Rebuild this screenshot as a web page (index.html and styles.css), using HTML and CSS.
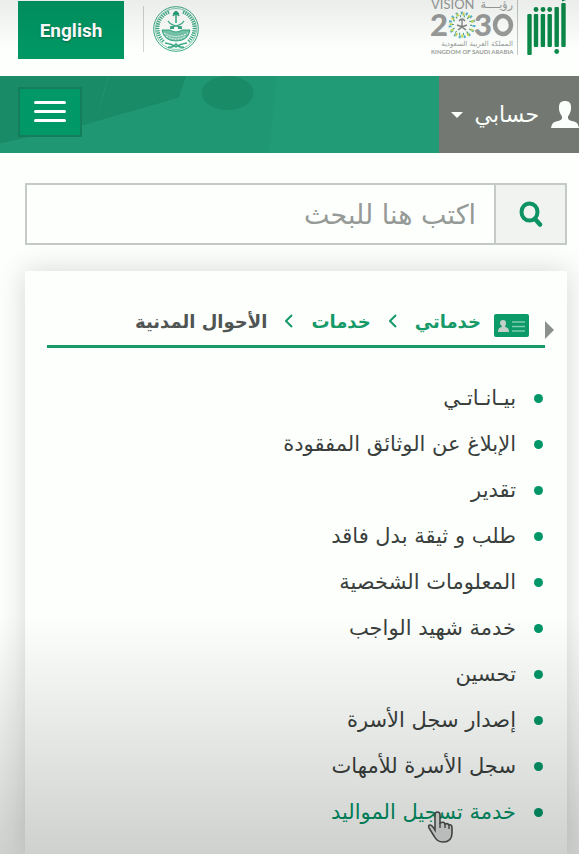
FILE: index.html
```
<!DOCTYPE html>
<html lang="ar" dir="rtl">
<head>
  <meta charset="UTF-8">
  <meta name="viewport" content="width=device-width, initial-scale=1.0">
  <title>أبشر - الأحوال المدنية</title>
  <link rel="stylesheet" href="styles.css">
</head>
<body>
  <header class="header">
    <a href="#" class="logo" aria-label="أبشر">
      <svg width="40" height="55" viewBox="0 0 40 55" fill="#0b8a4a">
        <rect x="1.300" y="14" width="4.400" height="41" rx="1"/>
        <rect x="7.800" y="14" width="4.400" height="33" rx="1"/>
        <rect x="14.700" y="14" width="4.400" height="33" rx="1"/>
        <rect x="21.500" y="14" width="4.400" height="33" rx="1"/>
        <rect x="28.500" y="7" width="4.400" height="40" rx="1"/>
        <rect x="35.300" y="3" width="4.400" height="44" rx="1"/>
        <circle cx="10" cy="9.500" r="2.400"/>
        <circle cx="17" cy="9.500" r="2.400"/>
        <circle cx="23.700" cy="9.500" r="2.400"/>
        <circle cx="30.700" cy="51.500" r="2.400"/>
        <path d="M36 0h4l-4 1.500z"/>
      </svg>
    </a>
    <a href="#" class="vision" aria-label="Vision 2030">
      <svg width="84" height="55" viewBox="0 0 84 55" direction="ltr">
        <g fill="#999c9a" font-family="Lato, sans-serif">
          <text x="1" y="9" font-size="13">VISION</text>
          <text x="83" y="8" font-size="11" text-anchor="end" font-family="DejaVu Sans, sans-serif">رؤيــــة</text>
          <text x="0" y="36" font-size="31" font-weight="900">2</text>
          <text x="44" y="36" font-size="31" font-weight="900">3</text>
          <ellipse cx="73" cy="25" rx="8" ry="9" fill="none" stroke="#999c9a" stroke-width="4.500"/>
          <text x="83" y="46" font-size="7" text-anchor="end" font-family="DejaVu Sans, sans-serif">المملكة العربية السعودية</text>
          <text x="1" y="54" font-size="6" font-weight="bold">KINGDOM OF SAUDI ARABIA</text>
        </g>
        <g fill="none" stroke-width="3">
          <circle cx="32" cy="25" r="12" stroke="#58b6cf" stroke-dasharray="2 3"/>
          <circle cx="32" cy="25" r="11" stroke="#cbd94c" stroke-dasharray="2 4" stroke-dashoffset="2"/>
          <circle cx="32" cy="25" r="9" stroke="#3e9c83" stroke-width="2" stroke-dasharray="1 3"/>
        </g>
        <path d="M32 20v6M29 21q3-4 6 0M27 25q5 1 9 5M37 25q-5 1-9 5" fill="none" stroke="#7f8583" stroke-width="1.3"/>
      </svg>
    </a>
    <a href="#" class="emblem" aria-label="وزارة الداخلية">
      <svg width="46" height="46" viewBox="0 0 46 46" fill="none" stroke="#3aa985">
        <circle cx="23" cy="23" r="22.3" stroke-width="1"/>
        <circle cx="23" cy="23" r="20.5" stroke-width=".6"/>
        <path d="M16 6C3 11 1 27 11 36M30 6c13 5 15 21 5 30" stroke-width="3.500" stroke-dasharray="1.3 1"/>
        <path d="M23 7v10" stroke-width="1.5"/>
        <path d="M20 10q0-4 3-5q3 1 3 5l-3-2z" fill="#1d9e74"/>
        <path d="M15 15q3 5 14 6M31 15q-3 5-14 6" stroke-width="1.3"/>
        <path d="M17 22h4M25 22h4" stroke-width="2"/>
        <path d="M9 24h8q6 4 12 0h8q-2 11-14 11T9 24z" fill="#1d9e74" fill-opacity=".6"/>
        <path d="M11 27q12 7 24 0M13 30q10 6 20 0" stroke="#fff" stroke-width="1" stroke-dasharray="2 1"/>
        <path d="M12 37q7 1 11 4q4-3 11-4M15 41q5 1 8-3q3 4 8 3" stroke-width="1.500"/>
      </svg>
    </a>
    <button class="lang-btn" type="button" lang="en">English</button>
  </header>

  <nav class="navbar">
    <svg class="navbar-bg" viewBox="0 0 439 77" preserveAspectRatio="none" aria-hidden="true">
      <path d="M0 0h186l-7 22L85 49 0 68z" fill="#198c67"/>
      <path d="M186 0h90l-8 77H0v-9l85-19 94-27z" fill="#1f9773"/>
      <ellipse cx="227" cy="17" rx="26" ry="17" fill="#18845f" opacity=".6"/>
      <path d="M0 68l85-19 94-27 7-22M100 30l8-30" fill="none" stroke="#2d9d7a" opacity=".4"/>
    </svg>
    <button class="account-btn" type="button">
      <svg width="28" height="27" viewBox="0 0 28 27" fill="#fbfffc" aria-hidden="true">
        <path d="M14 0c4 0 6 2 6 6 0 2 0 3-.5 4.500-.5 2-2 4-2.500 5v2c1 2 3 2 6 3 3 1 4 2 5 6.500H0C1 22.500 2 21.500 5 20.500c3-1 5-1 6-3v-2c-.5-1-2-3-2.500-5C8 9 8 8 8 6c0-4 2-6 6-6z"/>
      </svg>
      <span>حسابي</span>
      <span class="caret"></span>
    </button>
    <button class="menu-btn" type="button" aria-label="القائمة">
      <span class="bar"></span>
      <span class="bar"></span>
      <span class="bar"></span>
    </button>
  </nav>

  <main class="main">
    <form class="search">
      <button class="search-btn" type="submit" aria-label="بحث">
        <svg width="24" height="26" viewBox="0 0 24 26" fill="none" stroke="#0c9263" aria-hidden="true">
          <ellipse cx="10.500" cy="11" rx="8" ry="8.500" stroke-width="4"/>
          <path d="M16 18l5 5.500" stroke-width="4.500" stroke-linecap="round"/>
        </svg>
      </button>
      <input class="search-input" type="text" placeholder="اكتب هنا للبحث" aria-label="اكتب هنا للبحث">
    </form>

    <section class="card">
      <div class="breadcrumb">
        <svg class="card-icon" width="35" height="23" viewBox="0 0 35 23" aria-hidden="true">
          <rect width="35" height="23" rx="2" fill="#0c9a69"/>
          <path d="M9 6c2 0 3 1 3 3s-.5 2-1 4c3 .5 4 2 4 5H4c0-3 1-4.500 4-5-.5-2-2-2-2-4s1-3 3-3z" fill="#c3cfc8"/>
          <path d="M18 8h13M18 12.500h13M18 17h13" stroke="#7fcbae" stroke-width="1.500"/>
        </svg>
        <a href="#">خدماتي</a>
        <svg class="chevron" width="8" height="14" viewBox="0 0 8 14" aria-hidden="true"><path d="M7 1L1 7l6 6"/></svg>
        <a href="#">خدمات</a>
        <svg class="chevron" width="8" height="14" viewBox="0 0 8 14" aria-hidden="true"><path d="M7 1L1 7l6 6"/></svg>
        <span class="current">الأحوال المدنية</span>
        <span class="marker"></span>
      </div>
      <ul class="services">
        <li><a href="#">بيـانـاتـي</a></li>
        <li><a href="#">الإبلاغ عن الوثائق المفقودة</a></li>
        <li><a href="#">تقدير</a></li>
        <li><a href="#">طلب و ثيقة بدل فاقد</a></li>
        <li><a href="#">المعلومات الشخصية</a></li>
        <li><a href="#">خدمة شهيد الواجب</a></li>
        <li><a href="#">تحسين</a></li>
        <li><a href="#">إصدار سجل الأسرة</a></li>
        <li><a href="#">سجل الأسرة للأمهات</a></li>
        <li>
          <a href="#" class="active">خدمة تسجيل المواليد</a>
          <svg class="cursor" width="26" height="33" viewBox="0 0 26 33" aria-hidden="true">
            <path d="M8 19V4q0-3 2.500-3T13 4v8q4-2 5 1 3-1 4 1 3-1 3 3v5q0 9-9 9-6 0-9-6l-5-8q-1-3 1-3t5 5z" fill="#dfe2e0" stroke="#4c504e" stroke-width="1.600"/>
            <path d="M13 12v5M18 13v4M22 14v4" fill="none" stroke="#4c504e" stroke-width="1.400"/>
          </svg>
        </li>
      </ul>
    </section>
  </main>
</body>
</html>
```

FILE: styles.css
```
* {
  box-sizing: border-box;
}
body {
  margin: 0;
  min-height: 100vh;
  display: flex;
  flex-direction: column;
  background: #fcfffc;
  font-family: "DejaVu Sans", sans-serif;
  color: #3a3f3d;
}
/* shade over the top and bottom edges of the screen */
body::after {
  content: "";
  position: fixed;
  inset: 0;
  pointer-events: none;
  background:
    linear-gradient(rgba(0, 0, 0, 0.07), transparent 50px),
    linear-gradient(to top, rgba(0, 0, 0, 0.18), transparent 240px);
}
a {
  text-decoration: none;
}
button {
  cursor: pointer;
  padding: 0;
  border: 0;
  font-family: inherit;
}
svg {
  display: block;
}

/* Header */
.header {
  height: 76px;
  display: flex;
  align-items: flex-start;
  padding: 0 13px 0 18px;
}
.vision {
  margin-right: 8px;
  padding-right: 3px;
  border-right: 1px solid #c4c8c5;
}
.emblem {
  margin: 6px auto 0 19px;
  padding-left: 9px;
  border-left: 1px solid #d0d4d1;
}
.lang-btn {
  width: 106px;
  height: 58px;
  margin-top: 1px;
  background: #009764;
  color: #fff;
  font-family: Roboto, sans-serif;
  font-size: 19px;
  font-weight: bold;
  text-shadow: 0 1px 2px rgba(0, 0, 0, 0.3);
}

/* Navbar */
.navbar {
  position: relative;
  height: 77px;
  display: flex;
  align-items: center;
  justify-content: space-between;
  padding-left: 18px;
  background: #219b76;
}
.navbar-bg {
  position: absolute;
  left: 0;
  top: 0;
  width: 76%;
  height: 100%;
}
.account-btn {
  position: relative;
  height: 100%;
  width: 140px;
  display: flex;
  align-items: center;
  gap: 12px;
  background: #737873;
  color: #fbfffc;
  font-size: 22px;
}
.caret {
  border: 6px solid transparent;
  border-top-color: #fbfffc;
  border-bottom: 0;
}
.menu-btn {
  position: relative;
  width: 64px;
  height: 50px;
  margin-bottom: 6px;
  display: flex;
  flex-direction: column;
  align-items: center;
  justify-content: center;
  gap: 6px;
  background: #009866;
  border: 2px solid #147e5b;
}
.bar {
  width: 32px;
  height: 3px;
  border-radius: 2px;
  background: #fff;
}

/* Content */
.main {
  flex: 1;
  display: flex;
  flex-direction: column;
  padding: 30px 12px 0 25px;
}
.search {
  height: 62px;
  display: flex;
  border: 2px solid #c5cac6;
}
.search-btn {
  width: 71px;
  display: flex;
  align-items: center;
  justify-content: center;
  background: #f0f3ef;
  border-left: 2px solid #c5cac6;
}
.search-input {
  flex: 1;
  min-width: 0;
  padding: 0 18px;
  border: 0;
  outline: none;
  background: #fcfffc;
  font-family: inherit;
  font-size: 27px;
}
.search-input::placeholder {
  color: #969a97;
}
.card {
  flex: 1;
  margin-top: 26px;
  padding: 26px 22px 16px;
  background: #fcfffc;
  box-shadow: 0 0 28px rgba(0, 0, 0, 0.16);
}
.breadcrumb {
  position: relative;
  height: 51px;
  display: flex;
  align-items: center;
  padding: 0 16px 0 0;
  border-bottom: 3px solid #159a68;
  font-size: 18px;
  font-weight: bold;
  white-space: nowrap;
}
.breadcrumb a {
  color: #159a68;
}
.card-icon {
  margin: 8px 0 0 13px;
}
.chevron {
  margin: 0 18px;
  fill: none;
  stroke: #159a68;
  stroke-width: 2;
}
.current {
  color: #505452;
}
.marker {
  position: absolute;
  right: -9px;
  top: 24px;
  border: 9px solid transparent;
  border-left-color: #8c908d;
  border-right: 0;
}
.services {
  list-style: none;
  margin: 27px 0 0;
  padding: 0;
  font-size: 21px;
  line-height: 46px;
}
.services li {
  position: relative;
  display: flex;
  align-items: center;
  gap: 18px;
  padding-right: 2px;
}
.services li::before {
  content: "";
  width: 9px;
  height: 9px;
  border-radius: 50%;
  background: #009668;
}
.services a {
  color: #3a3f3d;
}
.services .active {
  color: #009266;
}
.cursor {
  position: absolute;
  right: 92px;
  top: 22px;
}
```
